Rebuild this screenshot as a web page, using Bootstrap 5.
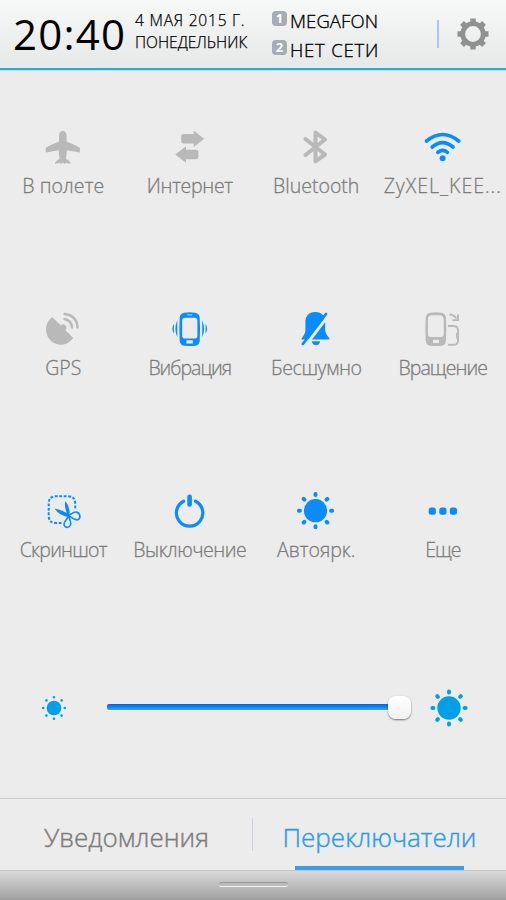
<!DOCTYPE html>
<html lang="ru">
<head>
<meta charset="utf-8">
<meta name="viewport" content="width=device-width, initial-scale=1">
<title>Переключатели</title>
<link href="https://cdn.jsdelivr.net/npm/bootstrap@5.3.0/dist/css/bootstrap.min.css" rel="stylesheet">
<style>
body{width:506px;height:900px;overflow:hidden;background:#ececec;font-family:"Open Sans","Noto Sans",sans-serif;font-weight:300;color:#808080}
svg{display:block;flex:none}
.statusbar{height:71px;padding-left:13px;background:linear-gradient(#f7f9f8,#e6e8e7);border-bottom:1px solid #c9d9df;color:#000}
.statusbar-line{height:2px;margin-top:-3px;background:#12b3e6;position:relative}
.clock{width:122px;font-size:42px;line-height:67px;font-weight:400;letter-spacing:1.2px}
.date{width:137px;font-size:15.5px;line-height:22px;padding-top:9px;-webkit-text-stroke:.25px}
.sims{width:165px;font-size:18.5px;line-height:29px;padding-top:6px;-webkit-text-stroke:.35px}
.sim-no{width:15px;height:15px;border-radius:4px;background:#a6abb5;color:#fff;font:700 13px/15px "Open Sans",sans-serif;text-align:center;margin:5px 3px 0 0;-webkit-text-stroke:0}
.sep{width:2px;height:28px;background:#b0c3f5}
.gear{margin-left:17px}
.status-tools{height:68px}
.tiles{height:547px;grid-template-columns:repeat(4,126.5px);grid-auto-rows:182px;margin-top:1px}
.tile{padding-top:56px}
.tile-name{font-size:19.5px;line-height:26px;margin-top:6px;white-space:nowrap;font-weight:300;color:#7c7c7c;-webkit-text-stroke:.3px}
.t-d1{letter-spacing:.8px}.t-d2{letter-spacing:0}
.t-s1{letter-spacing:.1px}.t-s2{letter-spacing:.8px}
.t1{letter-spacing:.1px}.t2{letter-spacing:-.3px}.t4{letter-spacing:1px}
.t6{letter-spacing:-1px}.t7{letter-spacing:-.4px}.t8{letter-spacing:-.9px}
.t9{letter-spacing:-.75px}.t10{letter-spacing:-.5px}.t12{letter-spacing:-1px}
.off{color:#b9b9b9}.on{color:#0a8cff}
.level{height:180px;padding:0 38px 0 41px}
.track{width:293px;height:6px;margin:0 0 2px 40px;border-radius:2px;background:linear-gradient(#0066d2,#1486f6 50%,#3c9dff);box-shadow:0 1px 0 #fff}
.knob{width:23px;height:23px;border-radius:8px;background:linear-gradient(#fff,#f1f1f1);box-shadow:0 1px 2px #0008;margin-right:-11px}
.tabs{height:73px;border-top:1px solid #cdcdcd;border-bottom:1px solid #c6c6c6}
.tab{width:253px;font-size:26px;line-height:76px;font-weight:300;color:#7c7c7c;-webkit-text-stroke:.4px}
.tab-on{color:#2e9bea}
.tab-on::after{content:"";position:absolute;left:42px;width:169px;height:4px;bottom:0;background:#359eea}
.tab-sep{width:1px;height:33px;background:#cfd4e3;margin:19px 0 0 -1px}
.handlebar{height:29px;background:linear-gradient(#d9d9d9,#a0a0a0)}
.handle{width:69px;height:5px;border-radius:2px;border-top:1px solid #969696;border-bottom:1px solid #f3f3f3;background:#bbb;margin-top:11px}
</style>
</head>
<body>
<svg width="0" height="0" class="position-absolute">
<defs>
<g id="rays" fill="none" stroke="currentColor" stroke-width="4" stroke-linecap="round"><path d="M0-16.600v1M0 16.600v-1M-16.600 0h1M16.600 0h-1M-11.800-11.800l.7.7M11.800 11.800l-.7-.7M11.800-11.800l-.7.7M-11.800 11.800l.7-.7"/></g>
</defs>
</svg>
<header class="statusbar d-flex">
<div class="clock text-nowrap">20:40</div>
<div class="date text-nowrap"><div class="t-d1">4 МАЯ 2015 Г.</div><div class="t-d2">ПОНЕДЕЛЬНИК</div></div>
<div class="sims text-nowrap"><div class="d-flex"><span class="sim-no">1</span><span class="t-s1">MEGAFON</span></div><div class="d-flex"><span class="sim-no">2</span><span class="t-s2">НЕТ СЕТИ</span></div></div>
<div class="status-tools d-flex align-items-center"><div class="sep"></div>
<svg class="gear" width="34" height="34" viewBox="-17 -17 34 34" fill="none" stroke="#909090"><circle r="10.300" stroke-width="4.800"/><path stroke-width="5.400" stroke-linejoin="round" d="M0-15.500v4M0 15.500v-4M-15.500 0h4M15.500 0h-4M-11-11l3 3M11 11l-3-3M11-11l-3 3M-11 11l3-3"/></svg></div>
</header>
<div class="statusbar-line"></div>
<main>
<section class="tiles d-grid text-center">
<div class="tile off d-flex flex-column align-items-center"><svg width="40" height="40" fill="currentColor"><path d="M19.800 3.700c2.400 0 3.800 2.600 3.800 6v4.700c4.500 2 9.500 3.500 13.300 6.600v4.500l-13-2.200-.8 8.700c1.800 1.200 4.300 2 4.600 4.800l-4.800-.8-1.500 1-1.600-1.400-1.600 1.400-1.500-1-4.800.8c.3-2.800 2.800-3.600 4.600-4.800l-.8-8.700-13 2.200v-4.500c3.800-3.100 8.800-4.600 13.300-6.600v-4.700c0-3.400 1.400-6 3.800-6z"/></svg><div class="tile-name t1">В полете</div></div>
<div class="tile off d-flex flex-column align-items-center"><svg width="40" height="40" fill="currentColor"><path d="M13.500 7h10.200V3.500l10.500 8.200-10.500 8.300v-3.600H13.500q-2.300 0-2.300-2.200V9.300Q11.200 7 13.500 7zM26 22.700H16v-3.500L5.200 27.400 16 35.700v-3.500h10q2.400 0 2.400-2.300v-5q0-2.200-2.400-2.200z"/></svg><div class="tile-name t2">Интернет</div></div>
<div class="tile off d-flex flex-column align-items-center"><svg width="40" height="40" fill="none" stroke="currentColor" stroke-width="4" stroke-linecap="round" stroke-linejoin="round"><path d="M9.500 12 29 27.500 19.500 34.300V5.600L29 12.500 9.500 28"/></svg><div class="tile-name t3">Bluetooth</div></div>
<div class="tile on d-flex flex-column align-items-center"><svg width="40" height="40" fill="none" stroke="currentColor" stroke-width="3.600" stroke-linecap="round"><path d="M3.500 14q16.200-13 32.200 0M9.200 20q10.400-8.600 20.800 0M14.800 25.300q4.800-4 9.600 0"/><circle cx="19.600" cy="31.300" r="3" fill="currentColor" stroke="none"/></svg><div class="tile-name t4">ZyXEL_KEE...</div></div>

<div class="tile off d-flex flex-column align-items-center"><svg width="40" height="40" fill="none" stroke="currentColor" stroke-width="2.400" stroke-linecap="round"><path fill="currentColor" stroke="none" d="M9.200 8.200 17.800 16.300a3.200 3.200 0 1 1 4.500 4.800l7.900 7.900Q25 35.700 18.500 35.700C9.500 35.700 3 29 3 20.500 3 15 5.500 11 9.200 8.200z"/><path d="M21.500 5q12.500 1.500 13 13.500M21.500 10q7 1.500 7.500 8.500"/></svg><div class="tile-name t5">GPS</div></div>
<div class="tile on d-flex flex-column align-items-center"><svg width="40" height="40" fill="currentColor"><path fill-rule="evenodd" d="M14.500 3.700q5-.7 10.300 0 4.500.4 4.900 4.800.7 12 0 23.500-.4 4-4.400 4.700-5.600.7-11.200 0-4-.7-4.400-4.700-.7-11.500 0-23.500.3-4.400 4.800-4.800zm-2.300 8v15q0 2.800 2.800 2.800h9.600q2.800 0 2.800-2.800v-15q0-3-2.800-3h-9.600q-2.800 0-2.800 3zM17 5.400v.8h5.300v-.8zM16.400 31.300v3.200h6.400v-3.200z"/><path d="M7.300 11.300v17Q3.500 20 7.300 11.300zM3.900 14.700v10q-3-5 0-10zM32.200 11.300v17q3.800-8.300 0-17zM35.600 14.700v10q3-5 0-10z"/></svg><div class="tile-name t6">Вибрация</div></div>
<div class="tile on d-flex flex-column align-items-center"><svg width="40" height="40" fill="currentColor"><path d="M19.300 3c7 0 9.900 4.500 9.900 10v8c0 3 1.500 5 4.200 8.200v1.200H5.600v-1.200C8.300 26 9.400 24 9.400 21v-8c0-5.500 2.900-10 9.900-10zM15.800 32.200h8.300q-.7 4-4.100 4t-4.200-4z"/><path d="M32.500 6.300 9.500 36.500" stroke="#ececec" stroke-width="3"/><path d="M30 5 6.800 35" stroke="currentColor" stroke-width="2.800" stroke-linecap="round"/></svg><div class="tile-name t7">Бесшумно</div></div>
<div class="tile off d-flex flex-column align-items-center"><svg width="40" height="40" fill="currentColor"><path fill-rule="evenodd" d="M7.500 3.700q5.300-.7 10.600 0 4.500.5 4.900 4.800.7 12 0 23.500-.4 4-4.400 4.700-5.700.7-11.500 0-4-.7-4.400-4.700-.7-11.500 0-23.500.3-4.300 4.800-4.800zM4.900 11v14q0 3 3 3h9.800q3 0 3-3V11q0-4.500-3.500-4.800H8.400q-3.500.3-3.500 4.800zM10 30.700v3.200h6v-3.200z"/><g fill="none" stroke="currentColor" stroke-width="1.900"><path d="M25 17h6q3.700.3 4 4v11q-.3 3.600-4 3.800h-6M34 24v5.500"/><path d="M26.500 5.500q4.300.2 7 4M35 5.500v5.600h-5.600"/></g></svg><div class="tile-name t8">Вращение</div></div>

<div class="tile on d-flex flex-column align-items-center"><svg width="40" height="40" fill="none" stroke="currentColor"><path stroke-width="2" stroke-dasharray="2.800 1.600" d="M18.500 32H13q-7.300 0-7.300-7.300V12.500Q5.700 5.300 13 5.300h12q7.200 0 7.200 7.200v6"/><path fill="currentColor" stroke="none" d="M11.500 17.500q9 1.500 15 6.700l-1 1.700q-9-1-14-8.400zM22.300 10q4.800 5.500 4.300 14l-1.500.5q-4.100-7-2.800-14.500z"/><path stroke-width="1.600" d="M25.500 24.600c2.500-1.200 5-4 8-3.500 3.700.8 4.500 5.500 1.800 7.400-2.800 1.800-6-2-9.800-3.900zM25.800 24.600c.2 3.200 2.800 6 1.700 9.400-1.200 3-5 3.200-6.300.4-1.200-3.500 3-6 4.600-9.800z"/></svg><div class="tile-name t9">Скриншот</div></div>
<div class="tile on d-flex flex-column align-items-center"><svg width="40" height="40" fill="none" stroke="currentColor" stroke-linecap="round"><path stroke-width="3.200" d="M13.700 10.200a13.200 13.200 0 1 0 11.800 0"/><path stroke-width="4.600" d="M19.600 5.800v7.700"/></svg><div class="tile-name t10">Выключение</div></div>
<div class="tile on d-flex flex-column align-items-center"><svg width="40" height="40"><g transform="translate(19.500 19.700)"><circle r="11.600" fill="currentColor"/><use href="#rays"/></g></svg><div class="tile-name t11">Автоярк.</div></div>
<div class="tile on d-flex flex-column align-items-center"><svg width="40" height="40" fill="currentColor"><rect x="5.700" y="16.500" width="7.200" height="7.200" rx="2.500"/><rect x="16.300" y="16.500" width="7.200" height="7.200" rx="2.500"/><rect x="26.800" y="16.500" width="7.200" height="7.200" rx="2.500"/></svg><div class="tile-name t12">Еще</div></div>
</section>
<section class="level d-flex align-items-center">
<svg width="26" height="26" viewBox="-13 -13 26 26" fill="#009fe8"><circle r="7.300"/><path fill="none" stroke="#009fe8" stroke-width="2.600" stroke-linecap="round" d="M0-10.800v0M0 10.800v0M-10.800 0h0M10.800 0h0M-7.600-7.600h0M7.600 7.600h0M7.600-7.600h0M-7.600 7.600h0"/></svg>
<div class="track d-flex align-items-center justify-content-end"><div class="knob"></div></div>
<svg class="ms-auto" width="38" height="38" viewBox="-19 -19 38 38" color="#009fe8"><circle r="11.700" fill="currentColor"/><use href="#rays"/></svg>
</section>
</main>
<nav class="tabs d-flex text-center">
<div class="tab">Уведомления</div><div class="tab-sep"></div><div class="tab tab-on position-relative">Переключатели</div>
</nav>
<footer class="handlebar d-flex justify-content-center"><div class="handle"></div></footer>
<script src="https://cdn.jsdelivr.net/npm/bootstrap@5.3.0/dist/js/bootstrap.bundle.min.js"></script>
</body>
</html>
